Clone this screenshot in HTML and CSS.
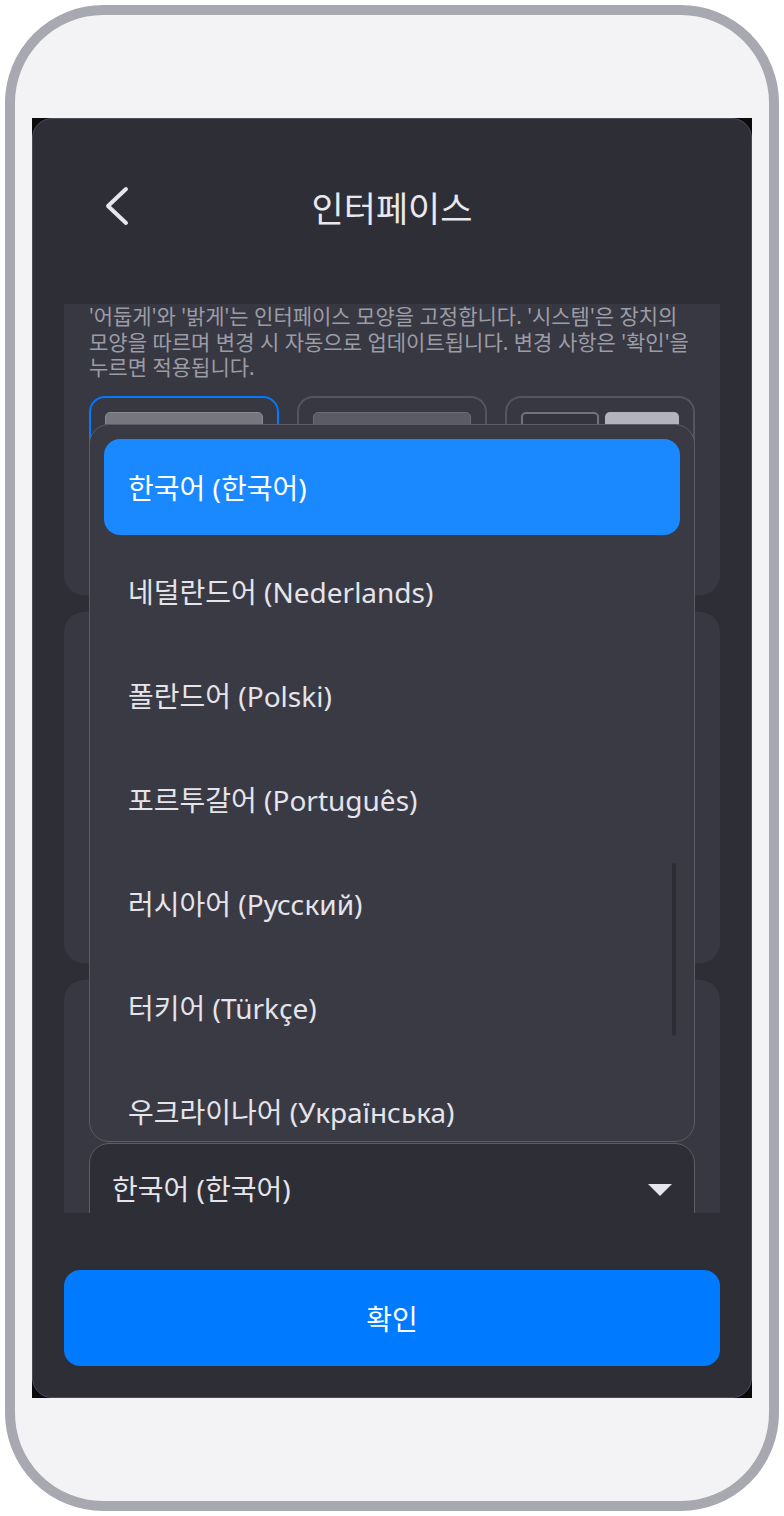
FILE: index.html
```html
<!DOCTYPE html>
<html lang="ko">
<head>
  <meta charset="UTF-8">
  <meta name="viewport" content="width=device-width, initial-scale=1.0">
  <link rel="stylesheet" href="styles.css">
  <title>인터페이스</title>
</head>
<body>
  <div class="phone">
    <div class="screen">
      <div class="panel">
        <header class="topbar">
          <button class="back" aria-label="뒤로">
            <svg width="26" height="40" viewBox="0 0 26 40">
              <path d="M21 3 L3 20 L21 37" fill="none" stroke="#e6e6ec" stroke-width="4" stroke-linecap="round" stroke-linejoin="round"/>
            </svg>
          </button>
          <h1>인터페이스</h1>
          <span></span>
        </header>

        <main class="scroll">
          <div class="scroll-inner">
            <section class="card card-theme">
              <p class="hint">'어둡게'와 '밝게'는 인터페이스 모양을 고정합니다. '시스템'은 장치의 모양을 따르며 변경 시 자동으로 업데이트됩니다. 변경 사항은 '확인'을 누르면 적용됩니다.</p>
              <div class="themes">
                <button class="theme active">
                  <span class="preview preview-dark"></span>
                  <span class="theme-label">어둡게</span>
                </button>
                <button class="theme">
                  <span class="preview preview-light"></span>
                  <span class="theme-label">밝게</span>
                </button>
                <button class="theme">
                  <span class="preview preview-system">
                    <span class="half half-dark"></span>
                    <span class="half half-light"></span>
                  </span>
                  <span class="theme-label">시스템</span>
                </button>
              </div>
            </section>

            <section class="card card-font">
              <h2>글꼴 크기</h2>
            </section>

            <section class="card card-lang">
              <div class="lang-head">
                <h2>언어</h2>
              </div>
              <div class="select">
                <ul class="dropdown">
                  <li class="option selected">한국어 (한국어)</li>
                  <li class="option">네덜란드어 (Nederlands)</li>
                  <li class="option">폴란드어 (Polski)</li>
                  <li class="option">포르투갈어 (Português)</li>
                  <li class="option">러시아어 (Русский)</li>
                  <li class="option">터키어 (Türkçe)</li>
                  <li class="option">우크라이나어 (Українська)</li>
                </ul>
                <div class="thumb"></div>
                <span class="select-value">한국어 (한국어)</span>
                <span class="caret"></span>
              </div>
            </section>
          </div>
        </main>

        <footer class="footer">
          <button class="confirm">확인</button>
        </footer>
      </div>
    </div>
  </div>
</body>
</html>
```

FILE: styles.css
```css
* {
  box-sizing: border-box;
}

body {
  margin: 0;
  background: #ffffff;
  font-family: "Noto Sans", "Noto Sans CJK KR", sans-serif;
}

button {
  font-family: inherit;
}

.phone {
  margin: 5px;
  width: 774px;
  height: 1506px;
  border: 10px solid #a8a8b0;
  border-radius: 98px;
  background: #f3f3f6;
  padding: 103px 0 0 17px;
}

.screen {
  width: 720px;
  height: 1280px;
  background: #0b0b0d;
}

.panel {
  height: 100%;
  background: #2e2e37;
  border: 1px solid #4d4d58;
  border-radius: 20px;
  display: flex;
  flex-direction: column;
}

/* header */
.topbar {
  height: 174px;
  display: grid;
  grid-template-columns: 1fr auto 1fr;
  align-items: center;
  padding: 0 72px;
}

.back {
  background: none;
  border: 0;
  padding: 0;
  width: 26px;
  height: 40px;
  cursor: pointer;
}

.back svg {
  display: block;
}

.topbar h1 {
  margin: 0;
  font-size: 35px;
  font-weight: 400;
  color: #e8e8ee;
}

/* scroll area */
.scroll {
  margin: 11px 31px 0;
  height: 909px;
  overflow: hidden;
}

.scroll-inner {
  margin-top: -24px;
}

.card {
  background: #383842;
  border-radius: 20px;
  padding: 24px 25px;
}

.card + .card {
  margin-top: 17px;
}

.card h2 {
  margin: 0;
  font-size: 24px;
  font-weight: 500;
  color: #e8e8ee;
}

.hint {
  margin: 0;
  font-size: 21px;
  line-height: 25.5px;
  color: #9c9ca6;
}

.themes {
  margin-top: 15px;
  display: grid;
  grid-template-columns: repeat(3, 1fr);
  gap: 18px;
}

.theme {
  height: 175px;
  background: transparent;
  border: 2px solid #55555f;
  border-radius: 16px;
  padding: 14px 14px 12px;
  display: flex;
  flex-direction: column;
  gap: 12px;
}

.theme.active {
  border-color: #007aff;
}

.preview {
  display: block;
  width: 100%;
  height: 100px;
  border-radius: 5px;
}

.preview-dark {
  background: #76767f;
  border: 1px solid #8a8a93;
}

.preview-light {
  background: #5b5b65;
  border: 1px solid #6c6c76;
}

.preview-system {
  display: flex;
  gap: 6px;
}

.half {
  flex: 1;
  border-radius: 5px;
}

.half-dark {
  background: #34343e;
  border: 2px solid #72727c;
}

.half-light {
  background: #b3b3bd;
}

.theme-label {
  font-size: 18px;
  color: #e8e8ee;
}

.card-font {
  height: 351px;
}

.card-lang {
  height: 400px;
}

.lang-head {
  height: 139px;
}

/* language select */
.select {
  position: relative;
  height: 94px;
  background: #2e2e37;
  border: 1px solid #5c5c68;
  border-radius: 20px;
  padding: 0 22px;
  display: flex;
  align-items: center;
  justify-content: space-between;
}

.select-value {
  font-size: 28px;
  line-height: 1.2;
  color: #e4e4ea;
}

.caret {
  width: 0;
  height: 0;
  border-left: 12px solid transparent;
  border-right: 12px solid transparent;
  border-top: 12px solid #e6e6ec;
}

.dropdown {
  position: absolute;
  left: -1px;
  right: -1px;
  bottom: calc(100% + 2px);
  height: 718px;
  margin: 0;
  padding: 14px;
  list-style: none;
  background: #3a3a44;
  border: 1px solid #5c5c68;
  border-radius: 20px;
  overflow: hidden;
  z-index: 10;
}

.option {
  height: 96px;
  margin-bottom: 8px;
  padding-left: 24px;
  display: flex;
  align-items: center;
  border-radius: 16px;
  font-size: 28px;
  color: #e4e4ea;
}

.option.selected {
  background: #1a89ff;
  color: #ffffff;
}

.thumb {
  position: absolute;
  right: 18px;
  bottom: calc(100% + 108px);
  width: 4px;
  height: 173px;
  border-radius: 2px;
  background: #2d2d36;
  z-index: 11;
}

/* footer */
.footer {
  padding: 57px 31px 31px;
}

.confirm {
  width: 100%;
  height: 96px;
  border: 0;
  border-radius: 16px;
  background: #007aff;
  color: #ffffff;
  font-size: 28px;
  cursor: pointer;
}
```
